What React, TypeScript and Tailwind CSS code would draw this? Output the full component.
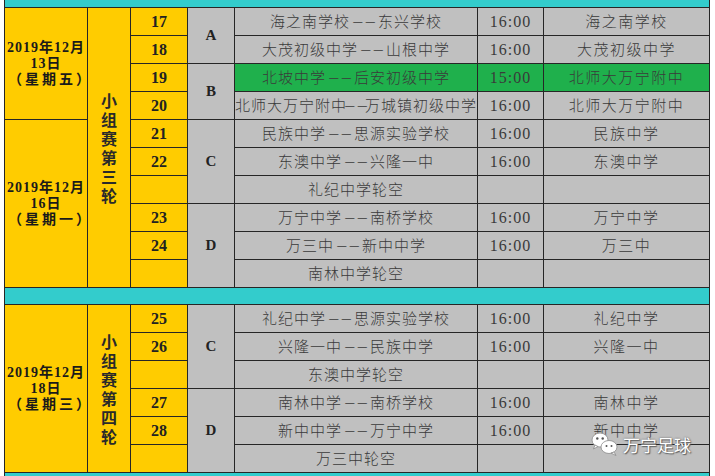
import React from "react";

type Row = { n: string; match: string; time?: string; venue?: string; green?: boolean };

const section1: Row[] = [
  { n: "17", match: "海之南学校--东兴学校", time: "16:00", venue: "海之南学校" },
  { n: "18", match: "大茂初级中学--山根中学", time: "16:00", venue: "大茂初级中学" },
  { n: "19", match: "北坡中学--后安初级中学", time: "15:00", venue: "北师大万宁附中", green: true },
  { n: "20", match: "北师大万宁附中--万城镇初级中学", time: "16:00", venue: "北师大万宁附中" },
  { n: "21", match: "民族中学--思源实验学校", time: "16:00", venue: "民族中学" },
  { n: "22", match: "东澳中学--兴隆一中", time: "16:00", venue: "东澳中学" },
  { n: "", match: "礼纪中学轮空" },
  { n: "23", match: "万宁中学--南桥学校", time: "16:00", venue: "万宁中学" },
  { n: "24", match: "万三中--新中中学", time: "16:00", venue: "万三中" },
  { n: "", match: "南林中学轮空" },
];

const section2: Row[] = [
  { n: "25", match: "礼纪中学--思源实验学校", time: "16:00", venue: "礼纪中学" },
  { n: "26", match: "兴隆一中--民族中学", time: "16:00", venue: "兴隆一中" },
  { n: "", match: "东澳中学轮空" },
  { n: "27", match: "南林中学--南桥学校", time: "16:00", venue: "南林中学" },
  { n: "28", match: "新中中学--万宁中学", time: "16:00", venue: "新中中学" },
  { n: "", match: "万三中轮空" },
];

const cjk = "font-['Noto_Sans_CJK_SC',sans-serif]";
const serif = "font-['Liberation_Serif','Noto_Sans_CJK_SC',serif]";

function MatchText({ text }: { text: string }) {
  const parts = text.split("--");
  if (parts.length < 2) return <>{text}</>;
  return (
    <>
      {parts[0]}
      <span className="inline-block w-[28px] text-center tracking-[0px]">
        <span className="inline-block scale-x-250">--</span>
      </span>
      {parts[1]}
    </>
  );
}

function DateCell({ span, lines }: { span: string; lines: string[] }) {
  return (
    <div
      className={`${span} bg-[#ffcc00] flex flex-col items-center justify-center text-[14px] leading-[16px] font-bold text-[#1a1a1a] ${serif}`}
    >
      <div className="tracking-[1px]">{lines[0]}</div>
      <div className="tracking-[1px]">{lines[1]}</div>
      <div className="tracking-[3px] pl-[3px]">{lines[2]}</div>
    </div>
  );
}

function RoundCell({ span, text }: { span: string; text: string }) {
  return (
    <div
      className={`${span} bg-[#ffcc00] flex flex-col items-center justify-center text-[16px] leading-[19px] font-bold text-[#2a2a2a] ${cjk}`}
    >
      {text.split("").map((c, i) => (
        <div key={i} className="h-[19px]">
          {c}
        </div>
      ))}
    </div>
  );
}

function GroupCell({ span, letter }: { span: string; letter: string }) {
  return (
    <div
      className={`${span} bg-[#c0c0c0] flex items-center justify-center text-[15px] font-bold text-[#222] ${serif}`}
    >
      {letter}
    </div>
  );
}

function rowCells(r: Row, key: string) {
  const bg = r.green ? "bg-[#1fb04c]" : "bg-[#c0c0c0]";
  return [
    <div
      key={key + "n"}
      className={`bg-[#ffcc00] flex items-center justify-center text-[16px] font-bold text-[#222] ${serif}`}
    >
      {r.n}
    </div>,
    <div
      key={key + "m"}
      className={`${bg} flex items-center justify-center text-[15px] tracking-[1px] whitespace-nowrap font-light text-[#3a3a3a] ${cjk}`}
    >
      <MatchText text={r.match} />
    </div>,
    <div
      key={key + "t"}
      className={`${bg} flex items-center justify-center text-[16px] tracking-[1px] text-[#3a3a3a] font-['Liberation_Serif',serif]`}
    >
      {r.time ?? ""}
    </div>,
    <div
      key={key + "v"}
      className={`${bg} flex items-center justify-center text-[15px] tracking-[1.5px] font-light text-[#3a3a3a] ${cjk}`}
    >
      {r.venue ?? ""}
    </div>,
  ];
}

function WeChatMark() {
  return (
    <div className="absolute left-[590px] top-[431px] flex items-center gap-[3px]">
      <svg width="30" height="26" viewBox="0 0 30 26">
        <g stroke="#8a8a8a" strokeWidth="0.8" fill="#ffffff">
          <ellipse cx="10" cy="9" rx="8" ry="7" />
          <path d="M5 14 L3.5 18 L8 15.5 Z" />
          <ellipse cx="19" cy="16" rx="8" ry="6.5" />
          <path d="M24 21 L26 24.5 L21 22 Z" />
        </g>
        <circle cx="7.3" cy="7.5" r="1.2" fill="#555" />
        <circle cx="12.7" cy="7.5" r="1.2" fill="#555" />
        <circle cx="16.5" cy="15" r="1" fill="#555" />
        <circle cx="21.5" cy="15" r="1" fill="#555" />
      </svg>
      <span
        className={`text-[17px] leading-none text-white ${cjk} [text-shadow:0_0_2px_#555,1px_1px_1px_#666]`}
      >
        万宁足球
      </span>
    </div>
  );
}

export default function App() {
  return (
    <div className="relative w-[715px] h-[476px] bg-white overflow-hidden">
      <div className="ml-[4px] w-[706px] bg-[#262626] px-[1px]">
        <div className="grid grid-cols-[82px_42px_56px_46px_242px_65px_165px] grid-rows-[7px_repeat(10,27px)_16px_repeat(6,27px)_3px] gap-[1px]">
          <div className="col-span-7 bg-[#33cccc]" />

          {section1.map((r, i) => {
            const cells: React.ReactNode[] = [];
            if (i === 0) {
              cells.push(
                <DateCell key="d1" span="row-span-4" lines={["2019年12月", "13日", "（星期五）"]} />,
                <RoundCell key="r1" span="row-span-10" text="小组赛第三轮" />
              );
            }
            if (i === 4) {
              cells.push(
                <DateCell key="d2" span="row-span-6" lines={["2019年12月", "16日", "（星期一）"]} />
              );
            }
            const row = rowCells(r, "a" + i);
            cells.push(row[0]);
            if (i === 0) cells.push(<GroupCell key="gA" span="row-span-2" letter="A" />);
            if (i === 2) cells.push(<GroupCell key="gB" span="row-span-2" letter="B" />);
            if (i === 4) cells.push(<GroupCell key="gC" span="row-span-3" letter="C" />);
            if (i === 7) cells.push(<GroupCell key="gD" span="row-span-3" letter="D" />);
            cells.push(row[1], row[2], row[3]);
            return <React.Fragment key={"s1" + i}>{cells}</React.Fragment>;
          })}

          <div className="col-span-7 bg-[#33cccc]" />

          {section2.map((r, i) => {
            const cells: React.ReactNode[] = [];
            if (i === 0) {
              cells.push(
                <DateCell key="d3" span="row-span-6" lines={["2019年12月", "18日", "（星期三）"]} />,
                <RoundCell key="r2" span="row-span-6" text="小组赛第四轮" />
              );
            }
            const row = rowCells(r, "b" + i);
            cells.push(row[0]);
            if (i === 0) cells.push(<GroupCell key="gC2" span="row-span-3" letter="C" />);
            if (i === 3) cells.push(<GroupCell key="gD2" span="row-span-3" letter="D" />);
            cells.push(row[1], row[2], row[3]);
            return <React.Fragment key={"s2" + i}>{cells}</React.Fragment>;
          })}

          <div className="col-span-7 bg-[#33cccc]" />
        </div>
      </div>
      <WeChatMark />
    </div>
  );
}
